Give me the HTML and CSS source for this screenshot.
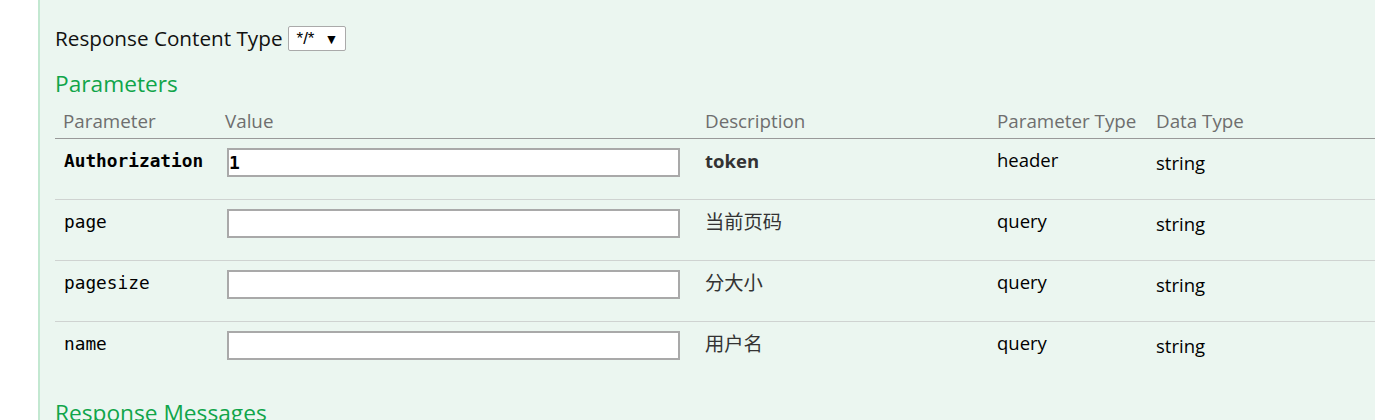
FILE: index.html
```html
<!DOCTYPE html>
<html>
<head>
<meta charset="utf-8">
<link rel="stylesheet" href="styles.css">
</head>
<body>
<div class="content">
  <div class="rct">
    <span class="rct-label">Response Content Type</span>
    <span class="select"><span class="sel-val">*/*</span><span class="sel-arrow">▼</span></span>
  </div>
  <h4 class="sec">Parameters</h4>
  <div class="params">
    <div class="row head">
      <div class="cell">Parameter</div>
      <div class="cell">Value</div>
      <div class="cell">Description</div>
      <div class="cell">Parameter Type</div>
      <div class="cell">Data Type</div>
    </div>
    <div class="row">
      <div class="cell name required">Authorization</div>
      <div class="cell val"><div class="input"><span class="input-text">1</span></div></div>
      <div class="cell desc strong">token</div>
      <div class="cell ptype">header</div>
      <div class="cell dtype">string</div>
    </div>
    <div class="row">
      <div class="cell name">page</div>
      <div class="cell val"><div class="input"></div></div>
      <div class="cell desc cjk">当前页码</div>
      <div class="cell ptype">query</div>
      <div class="cell dtype">string</div>
    </div>
    <div class="row">
      <div class="cell name">pagesize</div>
      <div class="cell val"><div class="input"></div></div>
      <div class="cell desc cjk">分大小</div>
      <div class="cell ptype">query</div>
      <div class="cell dtype">string</div>
    </div>
    <div class="row last">
      <div class="cell name">name</div>
      <div class="cell val"><div class="input"></div></div>
      <div class="cell desc cjk">用户名</div>
      <div class="cell ptype">query</div>
      <div class="cell dtype">string</div>
    </div>
  </div>
  <h4 class="sec sec-resp">Response Messages</h4>
</div>
</body>
</html>
```

FILE: styles.css
```css
html, body {
  margin: 0;
  padding: 0;
  overflow: hidden;
  background: #ffffff;
}
body {
  width: 1375px;
  height: 420px;
  font-family: "Open Sans", "Noto Sans CJK SC", sans-serif;
}
.content {
  margin-left: 38px;
  border-left: 2px solid #c3e8d1;
  background: #ebf6f0;
  padding: 26px 0 0 15px;
  height: 420px;
  box-sizing: border-box;
}
.rct {
  display: flex;
  align-items: center;
  gap: 5px;
  height: 25px;
}
.rct-label {
  font-size: 20.7px;
  color: #111;
  line-height: 25px;
}
.select {
  display: flex;
  align-items: center;
  box-sizing: border-box;
  width: 58px;
  height: 25px;
  background: #fff;
  border: 1px solid #aaa;
  border-radius: 2px;
  padding-left: 8px;
  font-family: "Liberation Sans", Arial, sans-serif;
  font-size: 17px;
  color: #000;
}
.sel-arrow {
  font-size: 14px;
  margin-left: 10px;
}
.sec {
  margin: 19px 0 0 0;
  font-size: 22.7px;
  line-height: 27px;
  font-weight: normal;
  color: #10a54a;
}
.sec-resp {
  margin-top: 17px;
}
.params {
  margin-top: 7px;
}
.row {
  display: grid;
  grid-template-columns: 162px 480px 292px 159px 1fr;
  height: 60px;
  border-bottom: 1px solid #cfd3d1;
}
.row.last {
  border-bottom: none;
}
.row.head {
  height: 34px;
  border-bottom: 1px solid #999;
  color: #6e6e6e;
  font-size: 18.8px;
  line-height: 24px;
}
.row.head .cell {
  padding-top: 5px;
  font-size: 18.8px;
}
.cell {
  padding: 0 8px;
  box-sizing: border-box;
  font-size: 18.5px;
  line-height: 24px;
  white-space: nowrap;
}
.name {
  font-family: "DejaVu Sans Mono", "Liberation Mono", monospace;
  font-size: 17.8px;
  padding-top: 10px;
  padding-left: 9px;
  color: #000;
}
.name.required {
  font-weight: bold;
}
.val {
  padding-top: 9px;
  padding-left: 10px;
}
.input {
  box-sizing: border-box;
  width: 453px;
  height: 29px;
  background: #fff;
  border: 2px solid #a9a9a9;
  display: flex;
  align-items: center;
  padding-left: 0;
}
.input-text {
  font-family: "DejaVu Sans Mono", monospace;
  font-weight: bold;
  font-size: 18px;
  color: #000;
}
.desc {
  padding-top: 10px;
  color: #333;
}
.desc.cjk {
  font-size: 19.3px;
}
.desc.strong {
  font-weight: bold;
}
.ptype {
  padding-top: 9px;
  color: #000;
}
.dtype {
  padding-top: 12px;
  color: #000;
}
```
